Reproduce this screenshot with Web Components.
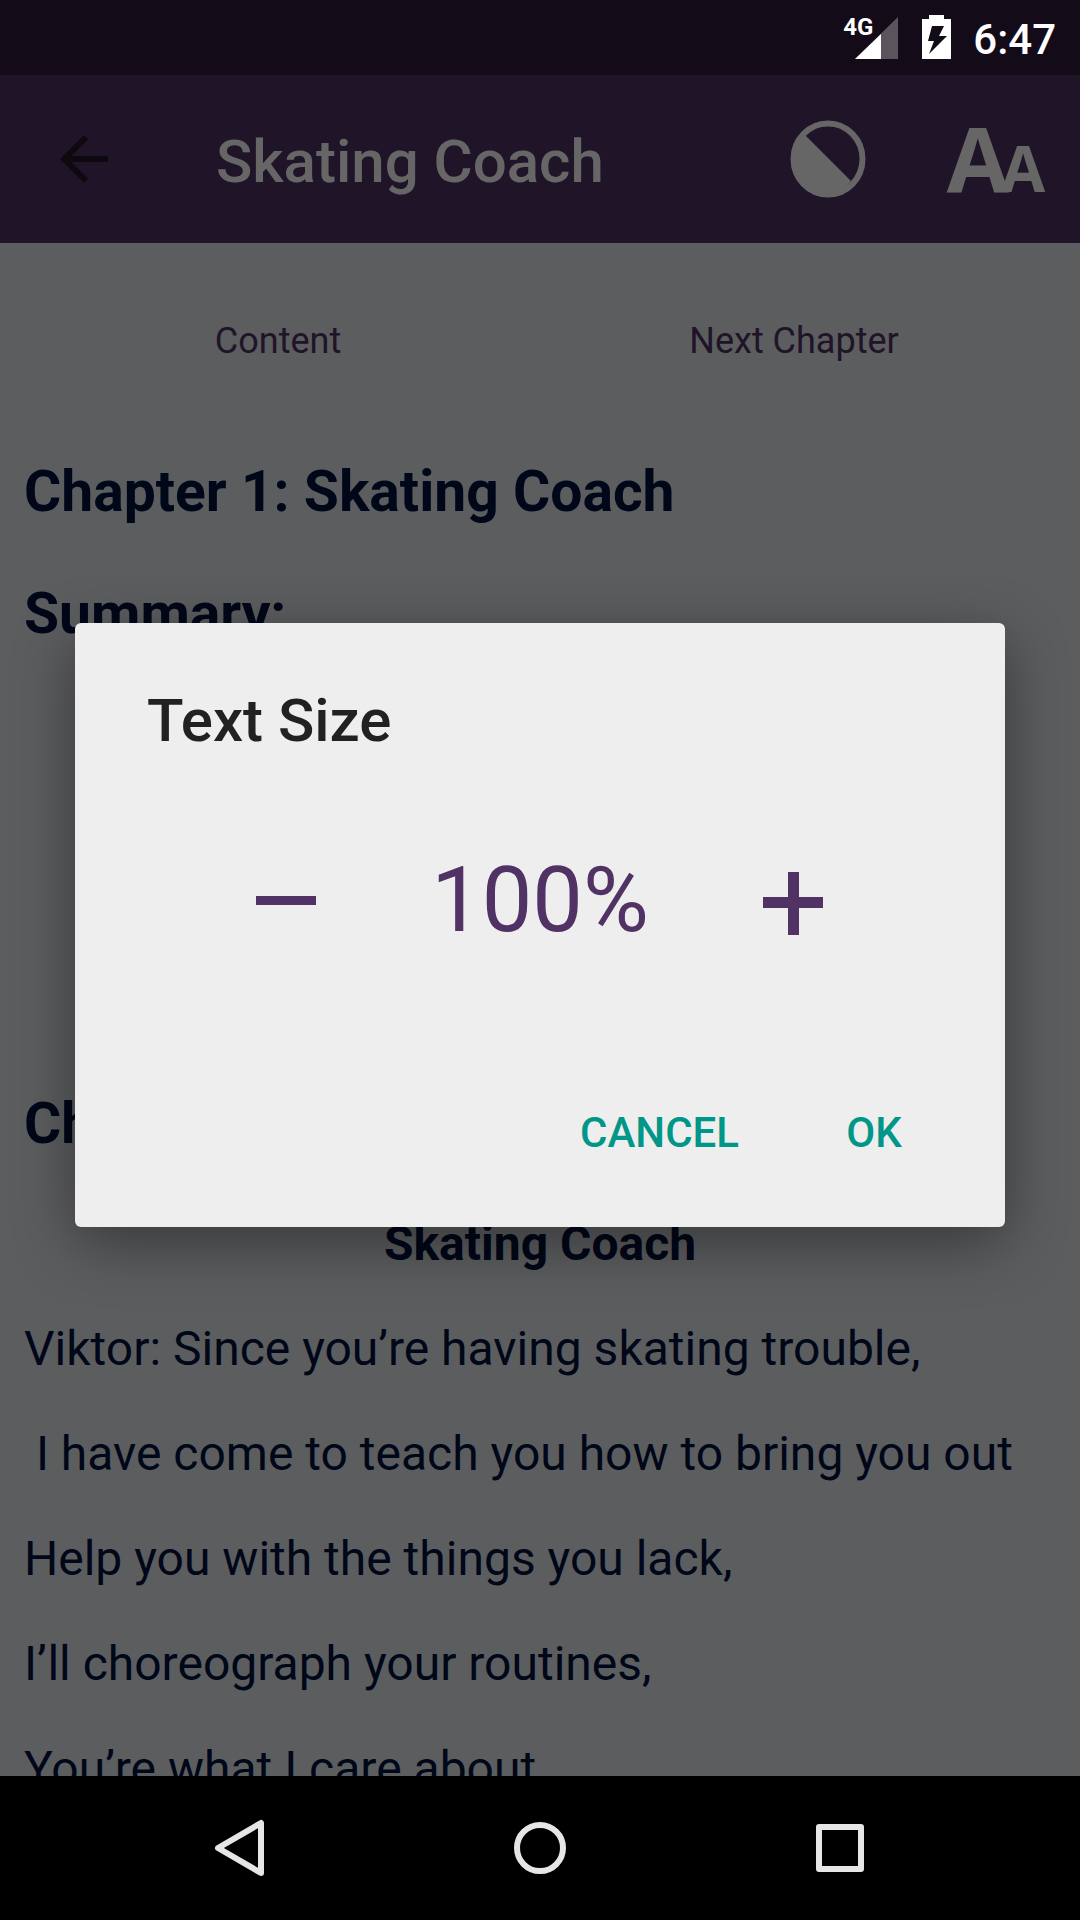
<!DOCTYPE html>
<html lang="en">
<head>
<meta charset="utf-8">
<meta name="viewport" content="width=device-width, initial-scale=1">
<title>Skating Coach</title>
<style>
    body {
        margin: 0;
        font-family: Roboto, "Liberation Sans", sans-serif;
        --purple: #503264;
        --paper: #e6e8ee;
        --ink: #00123c;
        --accent: #009688;
    }
</style>
</head>
<body>
<reader-screen>
    <status-bar slot="status" network="4G" time="6:47"></status-bar>
    <app-bar heading="Skating Coach"></app-bar>
    <chapter-page>
        <a slot="nav" href="#content">Content</a>
        <a slot="nav" href="#next">Next Chapter</a>
        <h2>Chapter 1: Skating Coach</h2>
        <h2 class="summary">Summary:</h2>
        <h2>Chapter 1:</h2>
        <h3>Skating Coach</h3>
        <p>Viktor: Since you’re having skating trouble,</p>
        <p>&nbsp;I have come to teach you how to bring you out</p>
        <p>Help you with the things you lack,</p>
        <p>I’ll choreograph your routines,</p>
        <p>You’re what I care about</p>
    </chapter-page>
    <text-size-dialog slot="overlay" heading="Text Size" value="100"></text-size-dialog>
    <system-nav slot="system"></system-nav>
</reader-screen>

<script>
function shadow(host, html) {
    const template = document.createElement("template");
    template.innerHTML = html;
    const root = host.attachShadow({ mode: "open" });
    root.append(template.content.cloneNode(true));
    return root;
}

class ReaderScreen extends HTMLElement {
    constructor() {
        super();
        shadow(this, `
            <style>
                :host {
                    display: flex;
                    flex-direction: column;
                    height: 100vh;
                    overflow: hidden;
                }
                main {
                    position: relative;
                    display: flex;
                    flex-direction: column;
                    flex: 1;
                    min-height: 0;
                    overflow: hidden;
                }
                .scrim {
                    position: absolute;
                    inset: 0;
                    display: grid;
                    align-items: center;
                    padding: 0 75px 2px;
                    background: rgba(0, 0, 0, 0.6);
                }
            </style>
            <slot name="status"></slot>
            <main>
                <slot></slot>
                <div class="scrim"><slot name="overlay"></slot></div>
            </main>
            <slot name="system"></slot>
        `);
    }
}

class StatusBar extends HTMLElement {
    constructor() {
        super();
        const root = shadow(this, `
            <style>
                :host {
                    display: flex;
                    justify-content: flex-end;
                    align-items: flex-end;
                    flex: none;
                    box-sizing: border-box;
                    height: 75px;
                    padding: 0 24px 14px 0;
                    background: #130b18;
                    color: #fff;
                }
                svg { display: block; }
                .signal {
                    position: relative;
                    padding-left: 12px;
                    margin-right: 24px;
                }
                .network {
                    position: absolute;
                    left: 0;
                    top: 0;
                    font: 700 24px/24px "Liberation Sans Narrow", Roboto, sans-serif;
                }
                time {
                    margin: 0 0 -4px 22px;
                    font-size: 42px;
                    line-height: 50px;
                    font-weight: 500;
                }
            </style>
            <span class="signal">
                <svg width="43" height="46" viewBox="0 0 43 46" fill="#fff">
                    <path d="M43 2V44H0z" opacity=".3"/>
                    <path d="M26 19V44H0z"/>
                </svg>
                <span class="network"></span>
            </span>
            <svg width="29" height="46" viewBox="0 0 29 46">
                <path fill="#fff" fill-rule="evenodd" d="M7 0H22V4H29V44H0V4H7zM10 11 6 26H12L7 39 25 21H17L22 11z"/>
            </svg>
            <time></time>
        `);
        this.networkEl = root.querySelector(".network");
        this.timeEl = root.querySelector("time");
    }

    connectedCallback() {
        this.networkEl.textContent = this.getAttribute("network");
        this.timeEl.textContent = this.getAttribute("time");
    }
}

class AppBar extends HTMLElement {
    constructor() {
        super();
        const root = shadow(this, `
            <style>
                :host {
                    display: flex;
                    align-items: center;
                    flex: none;
                    height: 168px;
                    background: var(--purple);
                    color: #fff;
                }
                h1 {
                    flex: 1;
                    margin: 5px 0 0 48px;
                    font-size: 60px;
                    line-height: 70px;
                    font-weight: 500;
                    white-space: nowrap;
                }
                button {
                    display: flex;
                    justify-content: center;
                    align-items: center;
                    width: 168px;
                    height: 168px;
                    padding: 0;
                    border: 0;
                    background: none;
                    color: inherit;
                }
                .letters {
                    align-items: baseline;
                    font: 700 90px/164px "Open Sans", sans-serif;
                }
                .letters small {
                    margin-left: -8px;
                    font-size: 64px;
                }
            </style>
            <button aria-label="Back">
                <svg width="72" height="72" viewBox="0 0 24 24" fill="#221a26">
                    <path d="M20 11H7.83l5.59-5.59L12 4l-8 8 8 8 1.41-1.41L7.83 13H20z"/>
                </svg>
            </button>
            <h1></h1>
            <button aria-label="Contrast">
                <svg width="76" height="78" viewBox="0 0 76 78">
                    <ellipse cx="38" cy="39" rx="34.5" ry="35.5" fill="none" stroke="#fff" stroke-width="6"/>
                    <path fill="#fff" d="M15 15 61 61Q51 74 38 74A34 35 0 0 1 4 39Q4 25 15 15z"/>
                </svg>
            </button>
            <button class="letters" aria-label="Text size"><span>A</span><small>A</small></button>
        `);
        this.titleEl = root.querySelector("h1");
    }

    connectedCallback() {
        this.titleEl.textContent = this.getAttribute("heading");
    }
}

class ChapterPage extends HTMLElement {
    constructor() {
        super();
        shadow(this, `
            <style>
                :host {
                    display: block;
                    flex: 1;
                    padding: 0 24px;
                    background: var(--paper);
                    color: var(--ink);
                }
                nav {
                    display: grid;
                    grid-template-columns: 1fr 1fr;
                    padding: 77px 4px 97px 0;
                    margin-left: -4px;
                    text-align: center;
                    font-size: 36px;
                    line-height: 42px;
                }
                ::slotted(a) {
                    color: var(--purple);
                    text-decoration: none;
                }
                ::slotted(h2) {
                    margin: 0 0 56px;
                    font-size: 57px;
                    line-height: 66px;
                    font-weight: 700;
                }
                /* the summary body is blank in this chapter */
                ::slotted(h2.summary) {
                    min-height: 454px;
                }
                ::slotted(h3) {
                    margin: 58px 0 48px;
                    font-size: 48px;
                    line-height: 57px;
                    font-weight: 700;
                    text-align: center;
                }
                ::slotted(p) {
                    margin: 0 0 48px;
                    font-size: 48px;
                    line-height: 57px;
                }
            </style>
            <nav><slot name="nav"></slot></nav>
            <slot></slot>
        `);
    }
}

class TextSizeDialog extends HTMLElement {
    constructor() {
        super();
        const root = shadow(this, `
            <style>
                :host {
                    display: block;
                    padding: 63px 0 40px;
                    border-radius: 6px;
                    background: #eee;
                    box-shadow: 0 16px 60px rgba(0, 0, 0, 0.4);
                }
                h2 {
                    margin: 0 72px 92px;
                    color: #212121;
                    font-size: 60px;
                    line-height: 70px;
                    font-weight: 500;
                }
                .stepper {
                    display: grid;
                    grid-template-columns: repeat(3, 1fr);
                    align-items: center;
                    justify-items: center;
                    padding: 0 84px;
                    color: var(--purple);
                }
                output {
                    font-size: 90px;
                    line-height: 106px;
                }
                button {
                    padding: 0;
                    border: 0;
                    background: none;
                    color: inherit;
                }
                svg { display: block; }
                footer {
                    display: flex;
                    justify-content: flex-end;
                    gap: 16px;
                    margin-top: 125px;
                    padding: 0 36px;
                }
                footer button {
                    min-width: 190px;
                    height: 108px;
                    padding: 0 24px;
                    color: var(--accent);
                    font: 500 42px/50px Roboto, sans-serif;
                }
            </style>
            <h2></h2>
            <div class="stepper">
                <button id="minus" aria-label="Smaller">
                    <svg width="72" height="72" viewBox="0 0 72 72" fill="currentColor"><path d="M6 31H66V40H6z"/></svg>
                </button>
                <output></output>
                <button id="plus" aria-label="Larger">
                    <svg width="72" height="72" viewBox="0 0 72 72" fill="currentColor"><path d="M30 7H41V32H65V43H41V70H30V43H5V32H30z"/></svg>
                </button>
            </div>
            <footer>
                <button>CANCEL</button>
                <button>OK</button>
            </footer>
        `);
        this.titleEl = root.querySelector("h2");
        this.outputEl = root.querySelector("output");
        root.querySelector("#minus").addEventListener("click", () => this.step(-10));
        root.querySelector("#plus").addEventListener("click", () => this.step(10));
    }

    static get observedAttributes() {
        return ["heading", "value"];
    }

    attributeChangedCallback() {
        this.titleEl.textContent = this.getAttribute("heading");
        this.outputEl.textContent = `${this.getAttribute("value")}%`;
    }

    step(amount) {
        this.setAttribute("value", Number(this.getAttribute("value")) + amount);
    }
}

class SystemNav extends HTMLElement {
    constructor() {
        super();
        shadow(this, `
            <style>
                :host {
                    display: grid;
                    grid-template-columns: repeat(3, 300px);
                    justify-content: center;
                    flex: none;
                    height: 144px;
                    background: #000;
                }
                button {
                    display: grid;
                    place-items: center;
                    padding: 0;
                    border: 0;
                    background: none;
                }
                svg {
                    fill: none;
                    stroke: #e6e6e6;
                    stroke-width: 6;
                    stroke-linejoin: round;
                }
            </style>
            <button aria-label="Back">
                <svg width="60" height="60" viewBox="0 0 60 60"><path d="M51 5V55L8 30z"/></svg>
            </button>
            <button aria-label="Home">
                <svg width="60" height="60" viewBox="0 0 60 60"><circle cx="30" cy="30" r="23"/></svg>
            </button>
            <button aria-label="Recent apps">
                <svg width="60" height="60" viewBox="0 0 60 60"><path d="M9 9H51V51H9z"/></svg>
            </button>
        `);
    }
}

customElements.define("reader-screen", ReaderScreen);
customElements.define("status-bar", StatusBar);
customElements.define("app-bar", AppBar);
customElements.define("chapter-page", ChapterPage);
customElements.define("text-size-dialog", TextSizeDialog);
customElements.define("system-nav", SystemNav);
</script>
</body>
</html>
